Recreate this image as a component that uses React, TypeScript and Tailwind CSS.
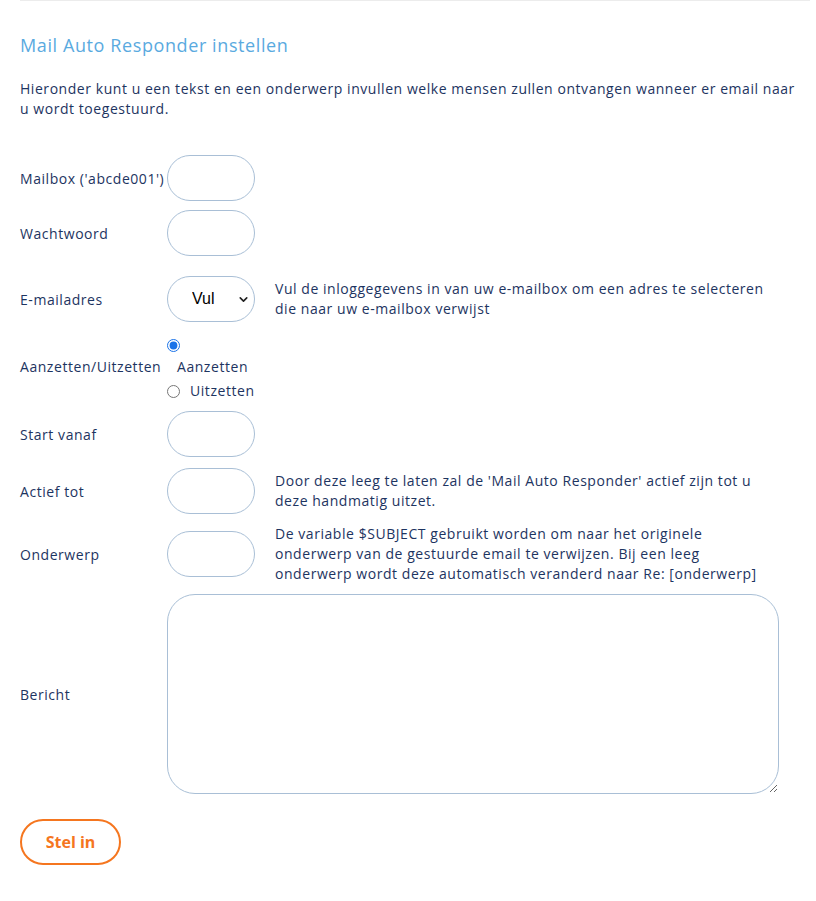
import React from "react"
import { ChevronDown } from "lucide-react"

const font = { fontFamily: '"Open Sans", "Liberation Sans", sans-serif' }

function Field({ className = "" }: { className?: string }) {
  return (
    <input
      type="text"
      className={`w-[88px] h-[46px] rounded-full border border-[#a9bfd6] bg-white px-4 text-sm outline-none ${className}`}
    />
  )
}

function Row({
  label,
  children,
  help,
  className = "",
}: {
  label: string
  children: React.ReactNode
  help?: React.ReactNode
  className?: string
}) {
  return (
    <div className={`flex items-center ${className}`}>
      <div className="w-[147px] shrink-0 whitespace-nowrap">{label}</div>
      <div className="w-[108px] shrink-0">{children}</div>
      {help && <div className="flex-1 whitespace-nowrap leading-[20px]">{help}</div>}
    </div>
  )
}

export default function App() {
  return (
    <div className="min-h-[901px] bg-white text-[14px] tracking-[0.55px] text-[#1d3461]" style={font}>
      <div className="mx-[20px] w-[790px] border-t border-[#ececec]">
        <h2 className="mt-[33px] text-[18px] leading-[22px] tracking-[0.6px] text-[#5aaadf]">
          Mail Auto Responder instellen
        </h2>

        <p className="mt-[23px] whitespace-nowrap leading-[20px]">
          Hieronder kunt u een tekst en een onderwerp invullen welke mensen zullen ontvangen wanneer er email naar
          <br />u wordt toegestuurd.
        </p>

        <form className="mt-[36px] flex flex-col" onSubmit={(e) => e.preventDefault()}>
          <Row label="Mailbox ('abcde001')">
            <Field />
          </Row>

          <Row label="Wachtwoord" className="mt-[9px]">
            <Field />
          </Row>

          <Row
            label="E-mailadres"
            className="mt-[20px]"
            help={
              <>
                Vul de inloggegevens in van uw e-mailbox om een adres te selecteren
                <br />
                die naar uw e-mailbox verwijst
              </>
            }
          >
            <div className="relative w-[88px] h-[46px]">
              <select
                className="w-full h-full appearance-none rounded-full border border-[#a9bfd6] bg-white pl-[24px] text-[16px] tracking-normal text-black outline-none"
                style={{ fontFamily: '"Liberation Sans", Arial, sans-serif' }}
              >
                <option>Vul</option>
              </select>
              <ChevronDown
                size={13}
                strokeWidth={3}
                className="pointer-events-none absolute right-[5px] top-[17px] text-[#222]"
              />
            </div>
          </Row>

          <div className="mt-[17px] flex items-start">
            <div className="mt-[18px] w-[147px] shrink-0 whitespace-nowrap leading-[20px]">Aanzetten/Uitzetten</div>
            <div className="flex flex-col">
              <input type="radio" name="aan" defaultChecked className="m-0 h-[13px] w-[13px] accent-[#1a73e8]" />
              <label className="mt-[5px] pl-[10px] leading-[20px]">Aanzetten</label>
              <div className="mt-[4px] flex items-center">
                <input type="radio" name="aan" className="m-0 h-[13px] w-[13px]" />
                <label className="pl-[10px] leading-[20px]">Uitzetten</label>
              </div>
            </div>
          </div>

          <Row label="Start vanaf" className="mt-[10px]">
            <Field />
          </Row>

          <Row
            label="Actief tot"
            className="mt-[11px]"
            help={
              <>
                Door deze leeg te laten zal de 'Mail Auto Responder' actief zijn tot u
                <br />
                deze handmatig uitzet.
              </>
            }
          >
            <Field />
          </Row>

          <Row
            label="Onderwerp"
            className="mt-[10px]"
            help={
              <>
                De variable $SUBJECT gebruikt worden om naar het originele
                <br />
                onderwerp van de gestuurde email te verwijzen. Bij een leeg
                <br />
                onderwerp wordt deze automatisch veranderd naar Re: [onderwerp]
              </>
            }
          >
            <Field />
          </Row>

          <div className="mt-[10px] flex items-center">
            <div className="w-[147px] shrink-0">Bericht</div>
            <textarea className="block w-[612px] h-[200px] rounded-[28px] border border-[#a9bfd6] bg-white p-3 outline-none" />
          </div>

          <div className="mt-[25px]">
            <button
              type="submit"
              className="w-[101px] h-[46px] rounded-full border-2 border-[#f5761f] bg-white text-[16px] font-bold tracking-normal text-[#f5761f]"
            >
              Stel in
            </button>
          </div>
        </form>
      </div>
    </div>
  )
}
